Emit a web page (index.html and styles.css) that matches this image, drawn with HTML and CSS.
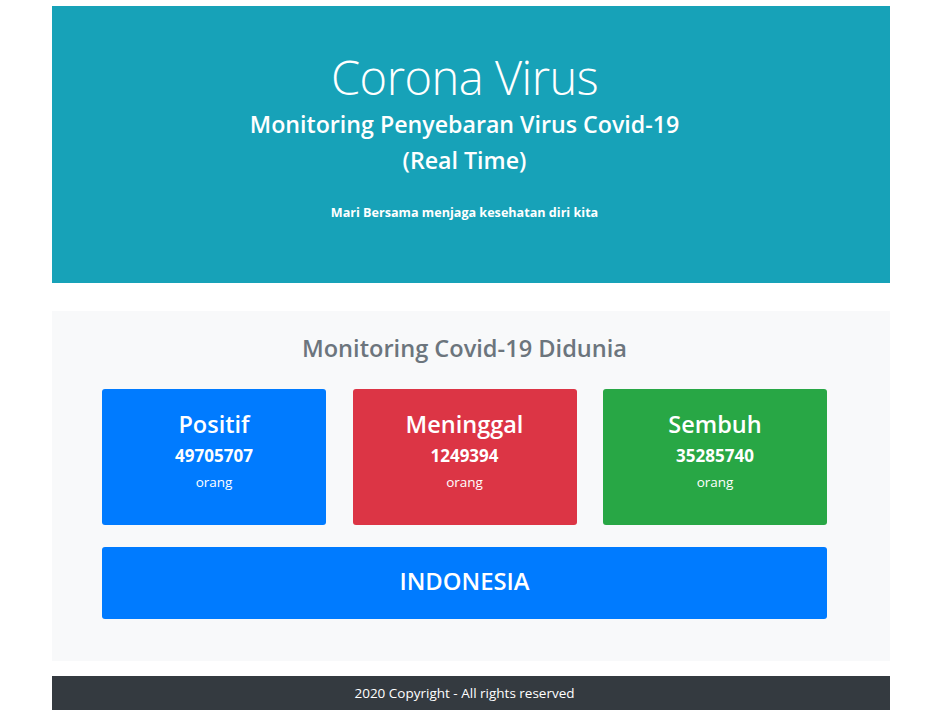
FILE: index.html
```html
<!DOCTYPE html>
<html lang="id">
<head>
<meta charset="utf-8">
<title>Corona Virus</title>
<link rel="stylesheet" href="styles.css">
</head>
<body>
<div class="page">
  <header class="hero">
    <h1 class="hero-title">Corona Virus</h1>
    <h2 class="hero-sub">Monitoring Penyebaran Virus Covid-19<br>(Real Time)</h2>
    <p class="hero-note">Mari Bersama menjaga kesehatan diri kita</p>
  </header>

  <section class="world">
    <h3 class="world-title">Monitoring Covid-19 Didunia</h3>
    <div class="cards">
      <div class="card card-blue">
        <div class="card-label">Positif</div>
        <div class="card-num">49705707</div>
        <div class="card-unit">orang</div>
      </div>
      <div class="card card-red">
        <div class="card-label">Meninggal</div>
        <div class="card-num">1249394</div>
        <div class="card-unit">orang</div>
      </div>
      <div class="card card-green">
        <div class="card-label">Sembuh</div>
        <div class="card-num">35285740</div>
        <div class="card-unit">orang</div>
      </div>
    </div>
    <div class="country">INDONESIA</div>
  </section>

  <footer class="footer">2020 Copyright - All rights reserved</footer>
</div>
</body>
</html>
```
FILE: styles.css
```css
* { box-sizing: border-box; }
html, body { margin: 0; padding: 0; background: #fff; }
body {
  font-family: "Open Sans", "Noto Sans", "Liberation Sans", sans-serif;
  color: #212529;
}
.page {
  width: 838px;
  margin: 0 0 0 52px;
  padding-top: 6px;
}
.hero {
  background: #17a2b8;
  color: #fff;
  height: 277px;
  padding: 42px 63px 0 50px;
  text-align: center;
}
.hero-title {
  margin: 0;
  font-weight: 300;
  font-size: 47px;
  line-height: 58px;
  letter-spacing: -0.5px;
}
.hero-sub {
  margin: 0;
  font-weight: 600;
  font-size: 23.2px;
  line-height: 36px;
}
.hero-note {
  margin: 25px 0 0;
  font-weight: 700;
  font-size: 12.6px;
  line-height: 20px;
}
.world {
  margin-top: 28px;
  background: #f8f9fa;
  height: 350px;
  padding: 20px 63px 0 50px;
}
.world-title {
  margin: 0;
  text-align: center;
  color: #6c757d;
  font-weight: 600;
  font-size: 23.6px;
  line-height: 34px;
}
.cards {
  margin-top: 24px;
  display: flex;
  justify-content: space-between;
}
.card {
  width: 224px;
  height: 136px;
  border-radius: 3px;
  color: #fff;
  text-align: center;
  padding-top: 19px;
}
.card-blue { background: #007bff; }
.card-red { background: #dc3545; }
.card-green { background: #28a745; }
.card-label {
  font-weight: 600;
  font-size: 23.5px;
  line-height: 32px;
}
.card-num {
  margin-top: 3px;
  font-weight: 700;
  font-size: 17px;
  line-height: 26px;
}
.card-unit {
  margin-top: 3px;
  font-size: 13.5px;
  line-height: 20px;
}
.country {
  margin-top: 22px;
  height: 72px;
  background: #007bff;
  border-radius: 3px;
  color: #fff;
  font-weight: 600;
  font-size: 23.8px;
  line-height: 68px;
  text-align: center;
}
.footer {
  margin-top: 15px;
  background: #343a40;
  color: #fff;
  height: 40px;
  padding: 7px 63px 0 50px;
  text-align: center;
  font-size: 13.5px;
  line-height: 20px;
}
```
